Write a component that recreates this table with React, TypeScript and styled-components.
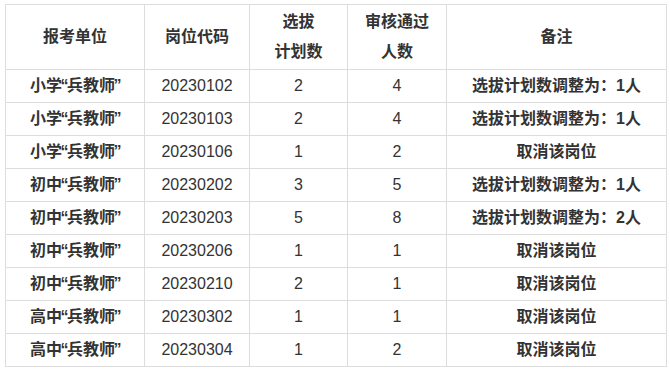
import { createGlobalStyle } from "styled-components";
import styled from "styled-components";

type Row = {
  stage: string
  code: string
  plan: number
  passed: number
  note: string
}

const ROWS: Row[] = [
  { stage: "小学", code: "20230102", plan: 2, passed: 4, note: "选拔计划数调整为：1人" },
  { stage: "小学", code: "20230103", plan: 2, passed: 4, note: "选拔计划数调整为：1人" },
  { stage: "小学", code: "20230106", plan: 1, passed: 2, note: "取消该岗位" },
  { stage: "初中", code: "20230202", plan: 3, passed: 5, note: "选拔计划数调整为：1人" },
  { stage: "初中", code: "20230203", plan: 5, passed: 8, note: "选拔计划数调整为：2人" },
  { stage: "初中", code: "20230206", plan: 1, passed: 1, note: "取消该岗位" },
  { stage: "初中", code: "20230210", plan: 2, passed: 1, note: "取消该岗位" },
  { stage: "高中", code: "20230302", plan: 1, passed: 1, note: "取消该岗位" },
  { stage: "高中", code: "20230304", plan: 1, passed: 2, note: "取消该岗位" },
];

const COL_WIDTHS = [139, 105, 98, 99, 220];

const App = () => {
  return <>
    <GlobalStyle />
    <Page>
      <Table>
        <colgroup>
          {COL_WIDTHS.map((w, i) => <col key={i} style={{ width: w }} />)}
        </colgroup>
        <thead>
          <tr>
            <HeadCell>报考单位</HeadCell>
            <HeadCell>岗位代码</HeadCell>
            <HeadCell>选拔<br />计划数</HeadCell>
            <HeadCell>审核通过<br />人数</HeadCell>
            <HeadCell>备注</HeadCell>
          </tr>
        </thead>
        <tbody>
          {ROWS.map(row =>
            <tr key={row.code}>
              <Cell bold>
                {row.stage}<Quote>“</Quote>兵教师<Quote>”</Quote>
              </Cell>
              <Cell>{row.code}</Cell>
              <Cell>{row.plan}</Cell>
              <Cell>{row.passed}</Cell>
              <Cell bold>{row.note}</Cell>
            </tr>)
          }
        </tbody>
      </Table>
    </Page>
  </>
}
export default App;

const GlobalStyle = createGlobalStyle`
  body {
    margin: 0;
    background: #ffffff;
  }
`

const Page = styled.div`
  padding: 4px 0 0 5px;
  font-family: "Liberation Sans", "Noto Sans CJK SC", sans-serif;
  color: #333333;
  font-size: 16px;
`

const Table = styled.table`
  border-collapse: collapse;
  table-layout: fixed;
  width: 661px;
`

const HeadCell = styled.th`
  border: 1px solid #dddddd;
  height: 64px;
  padding: 0 4px;
  line-height: 30px;
  font-weight: bold;
  text-align: center;
  vertical-align: middle;
`

const Cell = styled.td<{ bold?: boolean }>`
  border: 1px solid #dddddd;
  height: 32px;
  padding: 0 4px;
  line-height: 24px;
  text-align: center;
  vertical-align: middle;
  white-space: nowrap;
  font-weight: ${props => props.bold ? "bold" : "normal"};
`

const Quote = styled.span`
  margin: 0 -1.5px;
`
